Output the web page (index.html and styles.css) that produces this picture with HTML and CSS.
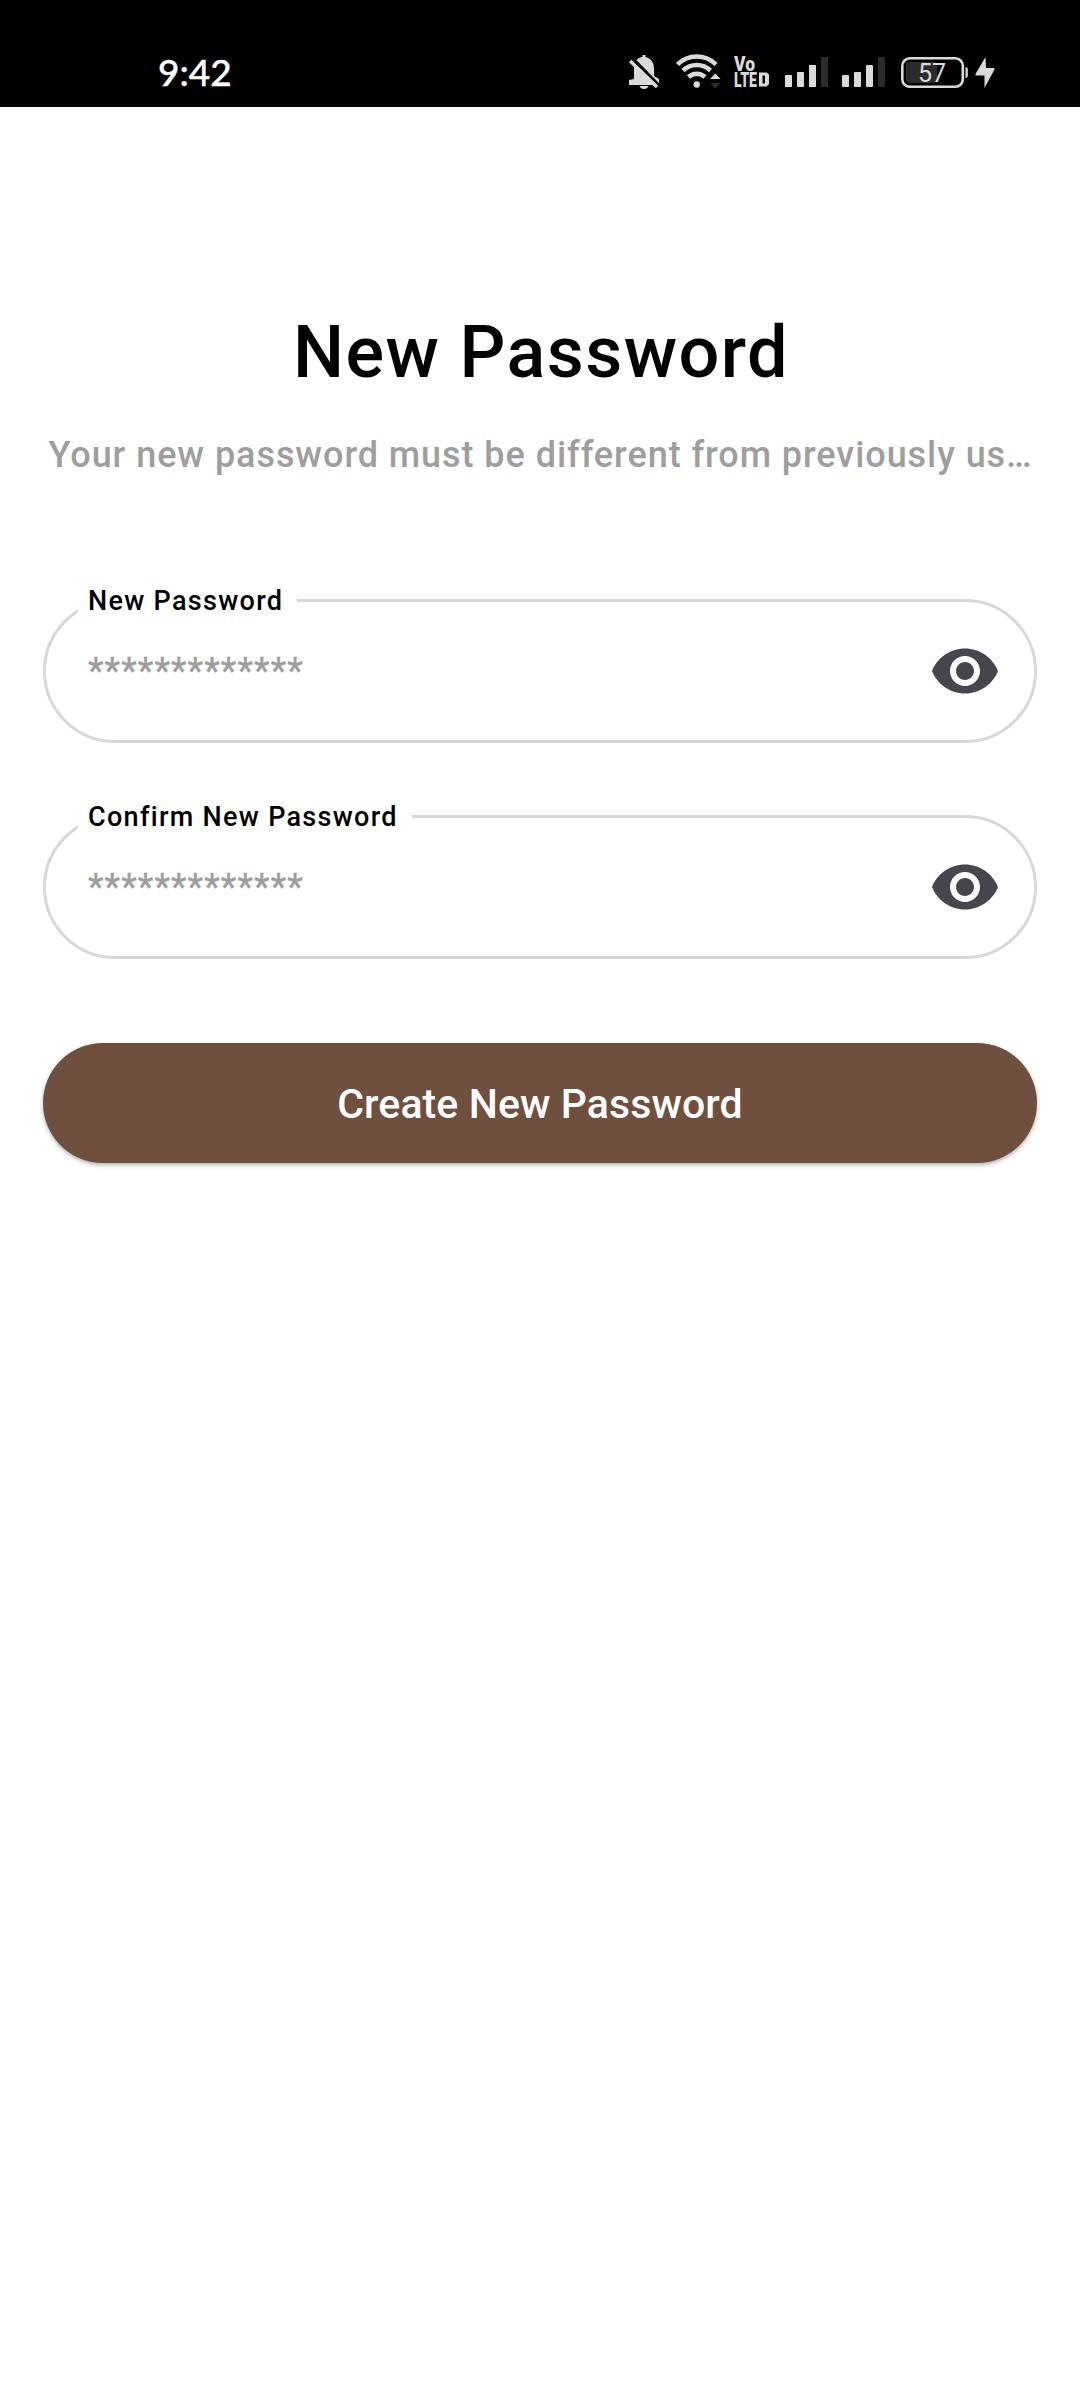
FILE: index.html
```html
<!DOCTYPE html>
<html lang="en">
<head>
<meta charset="utf-8">
<title>New Password</title>
<link rel="stylesheet" href="styles.css">
</head>
<body>
<header class="status">
  <span class="clock">9:42</span>
  <div class="status-icons">
    <svg width="31" height="38" viewBox="0 0 31 38"><path d="M5 27V15C5 9 9 5.500 13.500 5V3h3v2C21 6 25 10 25 16v8l5 3v6H0v-5z"/><path d="M10.500 34h9q-1 3-4.500 3t-4.500-3z"/><path class="cut" d="M3 6.500L31 35"/><path class="slash" d="M1.200 9L28 35"/></svg>
    <svg width="45" height="38" viewBox="0 0 45 38"><g class="arc"><path d="M1.500 12.500A27 27 0 0 1 40 12.500"/><path d="M7 18.500A20 20 0 0 1 34.500 18.500"/><path d="M12.500 25A12 12 0 0 1 29 25"/></g><circle cx="20.700" cy="32.500" r="3.200"/><path class="halo" d="M39 19l8 8.500v10H31.500v-10z"/><path d="M34 27l5.300-5.500L44.600 27z"/><path class="dim" d="M34 31h10.600l-5.300 5.500z"/></svg>
    <svg class="volte" width="37" height="38" viewBox="0 0 37 38"><text x="0" y="18.500" textLength="21" lengthAdjust="spacingAndGlyphs">Vo</text><text x="0" y="34.500" textLength="23" lengthAdjust="spacingAndGlyphs">LTE</text><path d="M25 20.500h7.500l2.500 2V32l-2.500 2.500H25zM28.500 23.500v8H31v-8z" fill-rule="evenodd"/></svg>
    <svg width="44" height="38" viewBox="0 0 44 38"><rect y="23" width="7" height="12" rx="1"/><rect x="12" y="20" width="7" height="15" rx="1"/><rect x="24" y="13" width="7" height="22" rx="1"/><rect class="dim" x="36" y="5" width="7" height="30" rx="1"/></svg>
    <svg width="44" height="38" viewBox="0 0 44 38"><rect y="23" width="7" height="12" rx="1"/><rect x="12" y="20" width="7" height="15" rx="1"/><rect x="24" y="13" width="7" height="22" rx="1"/><rect class="dim" x="36" y="5" width="7" height="30" rx="1"/></svg>
    <svg class="battery" width="68" height="38" viewBox="0 0 68 38"><rect class="shell" x="1.300" y="6.300" width="60.500" height="28.500" rx="7.500"/><rect class="dim" x="5" y="10" width="31" height="21" rx="4"/><path d="M64.500 15q2.300 0 2.300 2v7q0 2-2.300 2z"/><text x="17" y="29.500" textLength="28">57</text></svg>
    <svg width="21" height="38" viewBox="0 0 21 38"><path d="M10.500 5L.500 22q-.5 1.500 1 1.500H9.500V36L19.500 17.500q.5-1.500-1-1.500H11z"/></svg>
  </div>
</header>
<main class="page">
  <h1 class="title">New Password</h1>
  <p class="subtitle">Your new password must be different from previously us…</p>
  <form class="form">
    <div class="field">
      <label class="label" for="pw">New Password</label>
      <span class="value" id="pw">*************</span>
      <svg class="eye" width="72" height="72" viewBox="0 0 24 24"><path d="M12 4.500C7 4.500 2.730 7.610 1 12c1.730 4.390 6 7.500 11 7.500s9.270-3.110 11-7.500c-1.730-4.390-6-7.500-11-7.500zM12 17c-2.760 0-5-2.240-5-5s2.240-5 5-5 5 2.240 5 5-2.240 5-5 5zm0-8c-1.660 0-3 1.340-3 3s1.340 3 3 3 3-1.340 3-3-1.340-3-3-3z"/></svg>
    </div>
    <div class="field">
      <label class="label label-confirm" for="pw2">Confirm New Password</label>
      <span class="value" id="pw2">*************</span>
      <svg class="eye" width="72" height="72" viewBox="0 0 24 24"><path d="M12 4.500C7 4.500 2.730 7.610 1 12c1.730 4.390 6 7.500 11 7.500s9.270-3.110 11-7.500c-1.730-4.390-6-7.500-11-7.500zM12 17c-2.760 0-5-2.240-5-5s2.240-5 5-5 5 2.240 5 5-2.240 5-5 5zm0-8c-1.660 0-3 1.340-3 3s1.340 3 3 3 3-1.340 3-3-1.340-3-3-3z"/></svg>
    </div>
    <button class="submit" type="button">Create New Password</button>
  </form>
</main>
</body>
</html>
```
FILE: styles.css
```css
* { box-sizing: border-box; }
body {
  margin: 0;
  min-height: 2400px;
  background: #fff;
  font-family: Roboto, sans-serif;
  color: #000;
}
.status {
  display: flex;
  justify-content: space-between;
  height: 107px;
  padding: 52px 84px 0 158px;
  background: #000;
}
.clock {
  margin-top: -1px;
  font: 500 37px/42px Lato, sans-serif;
  -webkit-text-stroke: .4px #fff;
  color: #fff;
}
.status-icons { display: flex; fill: #dadada; }
.status-icons svg { display: block; margin-left: 14px; }
.status-icons svg:nth-child(2) { margin-left: 16px; }
.status-icons svg:nth-child(3) { margin-left: 13px; }
.status-icons svg:nth-child(5) { margin-left: 13px; }
.status-icons svg:nth-child(6) { margin-left: 15px; }
.status-icons svg:nth-child(7) { margin-left: 6px; }
.status-icons .dim { fill: #2b2b2b; }
.cut { stroke: #000; stroke-width: 4; }
.slash { stroke: #dadada; stroke-width: 3.5; }
.arc { fill: none; stroke: #dadada; stroke-width: 4.500; }
.status-icons .halo { fill: #000; }
.volte text { font: 900 19.500px Roboto, sans-serif; }
.shell { fill: none; stroke: #dadada; stroke-width: 2.600; }
.battery text { font: 400 25px Roboto, sans-serif; }

.page {
  display: flex;
  flex-direction: column;
  padding: 204px 43px 0;
}
.title {
  margin: 0;
  padding-left: 2px;
  font-size: 72px;
  line-height: 84px;
  font-weight: 500;
  letter-spacing: 1.4px;
  text-align: center;
}
.subtitle {
  margin: 36px 0 0;
  padding-left: 1px;
  font-size: 36px;
  line-height: 48px;
  font-weight: 500;
  letter-spacing: .94px;
  text-align: center;
  white-space: nowrap;
  color: #9e9e9e;
}
.form {
  display: flex;
  flex-direction: column;
  gap: 72px;
  margin-top: 120px;
}
.field {
  position: relative;
  display: flex;
  align-items: center;
  justify-content: space-between;
  height: 144px;
  padding: 0 33px 0 42px;
  border: 3px solid #d8d8d8;
  border-radius: 72px;
}
.label {
  position: absolute;
  left: 32px;
  top: -17px;
  width: 219px;
  height: 32px;
  padding-left: 10px;
  background: #fff;
  font-size: 27px;
  line-height: 32px;
  font-weight: 500;
  letter-spacing: 1.3px;
  white-space: nowrap;
}
.label-confirm { width: 334px; }
.value {
  font-size: 36px;
  line-height: 42px;
  letter-spacing: 1.1px;
  -webkit-text-stroke: .4px #9e9e9e;
  color: #9e9e9e;
}
.eye { fill: #49454f; }
.submit {
  margin-top: 12px;
  height: 120px;
  padding: 2px 0 0;
  border: 0;
  border-radius: 60px;
  background: #6f4f3e;
  box-shadow: 0 2px 4px rgba(0, 0, 0, .3);
  font: 500 41px/48px Roboto, sans-serif;
  letter-spacing: .1px;
  color: #fff;
}
```
